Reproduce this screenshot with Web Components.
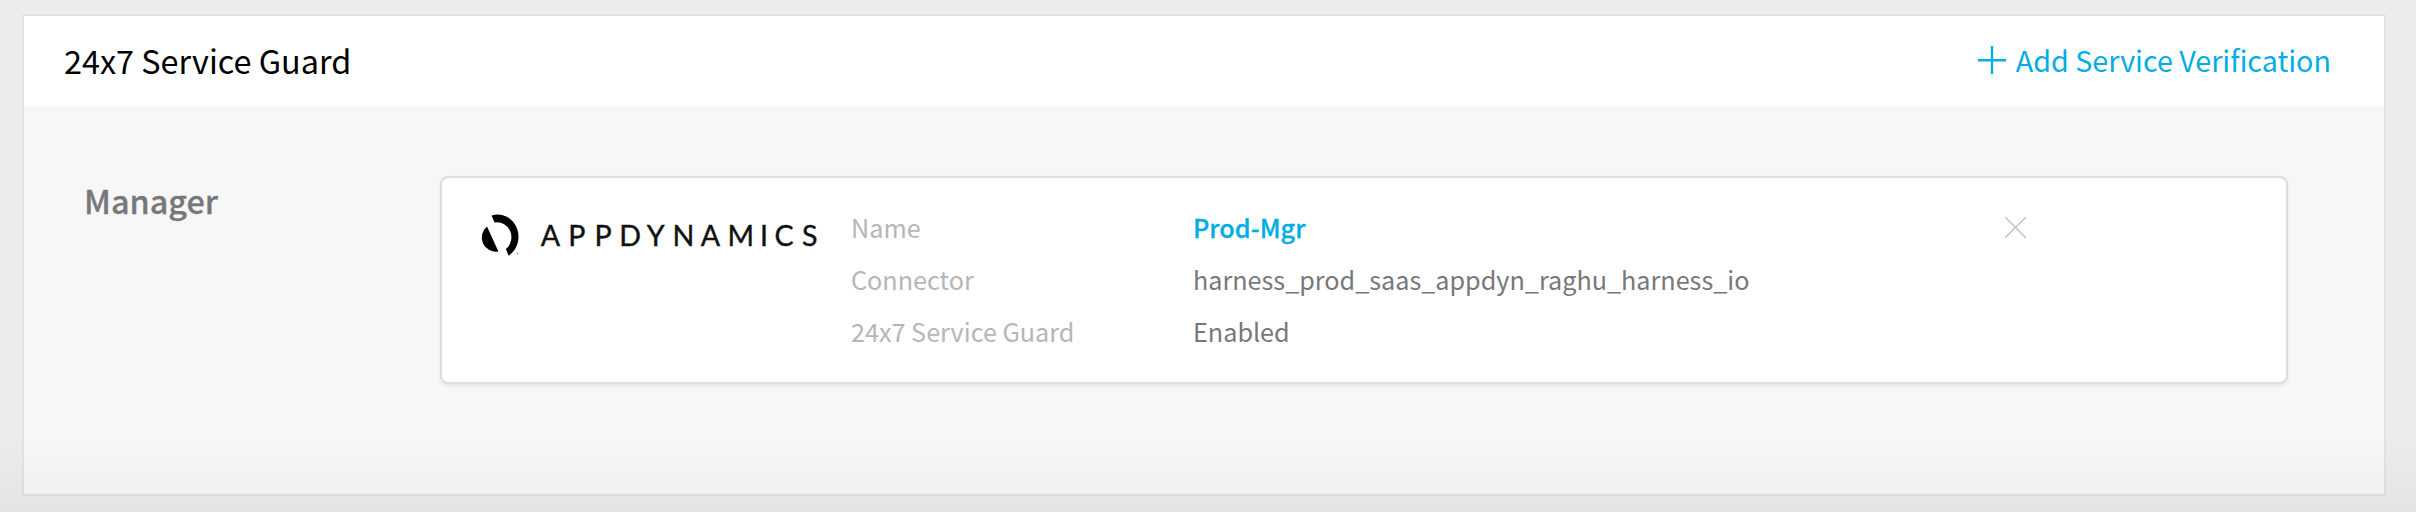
<!DOCTYPE html>
<html lang="en">
<head>
<meta charset="utf-8">
<title>24x7 Service Guard</title>
<style>
body{margin:0;background:#ececec;font-family:"Noto Sans CJK SC","Noto Sans",sans-serif}
</style>
</head>
<body>
<guard-panel>
  <span slot="title">24x7 Service Guard</span>
  <add-action slot="action">Add Service Verification</add-action>
  <service-row>
    <span slot="name">Manager</span>
    <verification-card>
      <detail-row label="Name" link>Prod-Mgr</detail-row>
      <detail-row label="Connector">harness_prod_saas_appdyn_raghu_harness_io</detail-row>
      <detail-row label="24x7 Service Guard">Enabled</detail-row>
    </verification-card>
  </service-row>
</guard-panel>
<script>
const define=(name,html,setup)=>customElements.define(name,class extends HTMLElement{
  connectedCallback(){
    if(this.shadowRoot)return;
    const t=document.createElement('template');
    t.innerHTML=html;
    this.attachShadow({mode:'open'}).append(t.content.cloneNode(true));
    if(setup)setup(this);
  }
});
define('guard-panel',`<style>
:host{display:block;box-sizing:border-box;height:512px;padding:14px 30px 16px 22px;position:relative}
section{box-sizing:border-box;height:482px;border:2px solid #e2e2e2;border-radius:2px;background:#f7f7f7}
header{display:flex;align-items:center;justify-content:space-between;box-sizing:border-box;height:90px;padding:0 53px 2px 40px;background:#fff}
h1{margin:0;font-size:32.4px;line-height:48px;font-weight:400;color:#000}
/* soft shade along the bottom of the page */
:host::after{content:"";position:absolute;left:0;right:0;bottom:0;height:74px;background:linear-gradient(rgba(0,0,0,0),rgba(0,0,0,.035));pointer-events:none}
</style><section><header><h1><slot name="title"></slot></h1><slot name="action"></slot></header><slot></slot></section>`);
define('add-action',`<style>
:host{display:flex;align-items:center;gap:10px;color:#00ade4;font-size:28.7px;line-height:44px}
svg{display:block}
</style><svg width="28" height="28" viewBox="0 0 28 28"><path d="M0 14.3h28M14 0v28" stroke="currentColor" stroke-width="2.4"/></svg><span><slot></slot></span>`);
define('service-row',`<style>
:host{display:grid;grid-template-columns:356px 1848px;padding:70px 0 0 60px}
h2{margin:0;font-size:32.4px;line-height:48px;font-weight:500;color:#77787b;-webkit-text-stroke:.3px #77787b}
</style><h2><slot name="name"></slot></h2><slot></slot>`);
define('verification-card',`<style>
:host{display:grid;grid-template-columns:369px 1fr 340px;box-sizing:border-box;height:208px;padding:23px 0 0 40px;background:#fff;border:2px solid #ddd;border-radius:8px;box-shadow:0 2px 4px rgba(0,0,0,.07)}
.close{display:block;margin:16px 0 0 59px}
</style><app-logo></app-logo><div><slot></slot></div><svg class="close" width="21" height="21" viewBox="0 0 21 21"><path d="M0 0L21 21M21 0L0 21" stroke="#bfc0c2" stroke-width="1.4"/></svg>`);
define('app-logo',`<style>
:host{display:block}
svg{display:block;overflow:visible;margin-top:12px}
text{font-family:Lato,sans-serif;font-size:28.6px;fill:#111;stroke:#111;stroke-width:.4}
</style><svg width="340" height="44" viewBox="482 213 340 44"><path d="M491.5 215.4A21 22.3 0 0 1 508.6 255.7L505.9 249A14.3 15 0 0 0 494.6 222.4Z"/><path d="M487 226.5L498.4 251.5A14.2 14.2 0 0 1 487 226.5Z"/><circle cx="517.5" cy="253.5" r=".9" fill="#999"/><text y="245.8" x="540.8 568.2 594.4 619.2 646.7 672.5 700.8 727.6 760 774.6 802">APPDYNAMICS</text></svg>`);
define('detail-row',`<style>
:host{display:grid;grid-template-columns:342px 1fr;font-size:25.2px;line-height:52px;color:#77787b;white-space:nowrap}
.label{color:#b5b6b8}
:host([link]) .value{color:#00ade4;font-weight:500;-webkit-text-stroke:.3px #00ade4}
</style><span class="label"></span><span class="value"><slot></slot></span>`,el=>{el.shadowRoot.querySelector('.label').textContent=el.getAttribute('label')});
</script>
</body>
</html>
